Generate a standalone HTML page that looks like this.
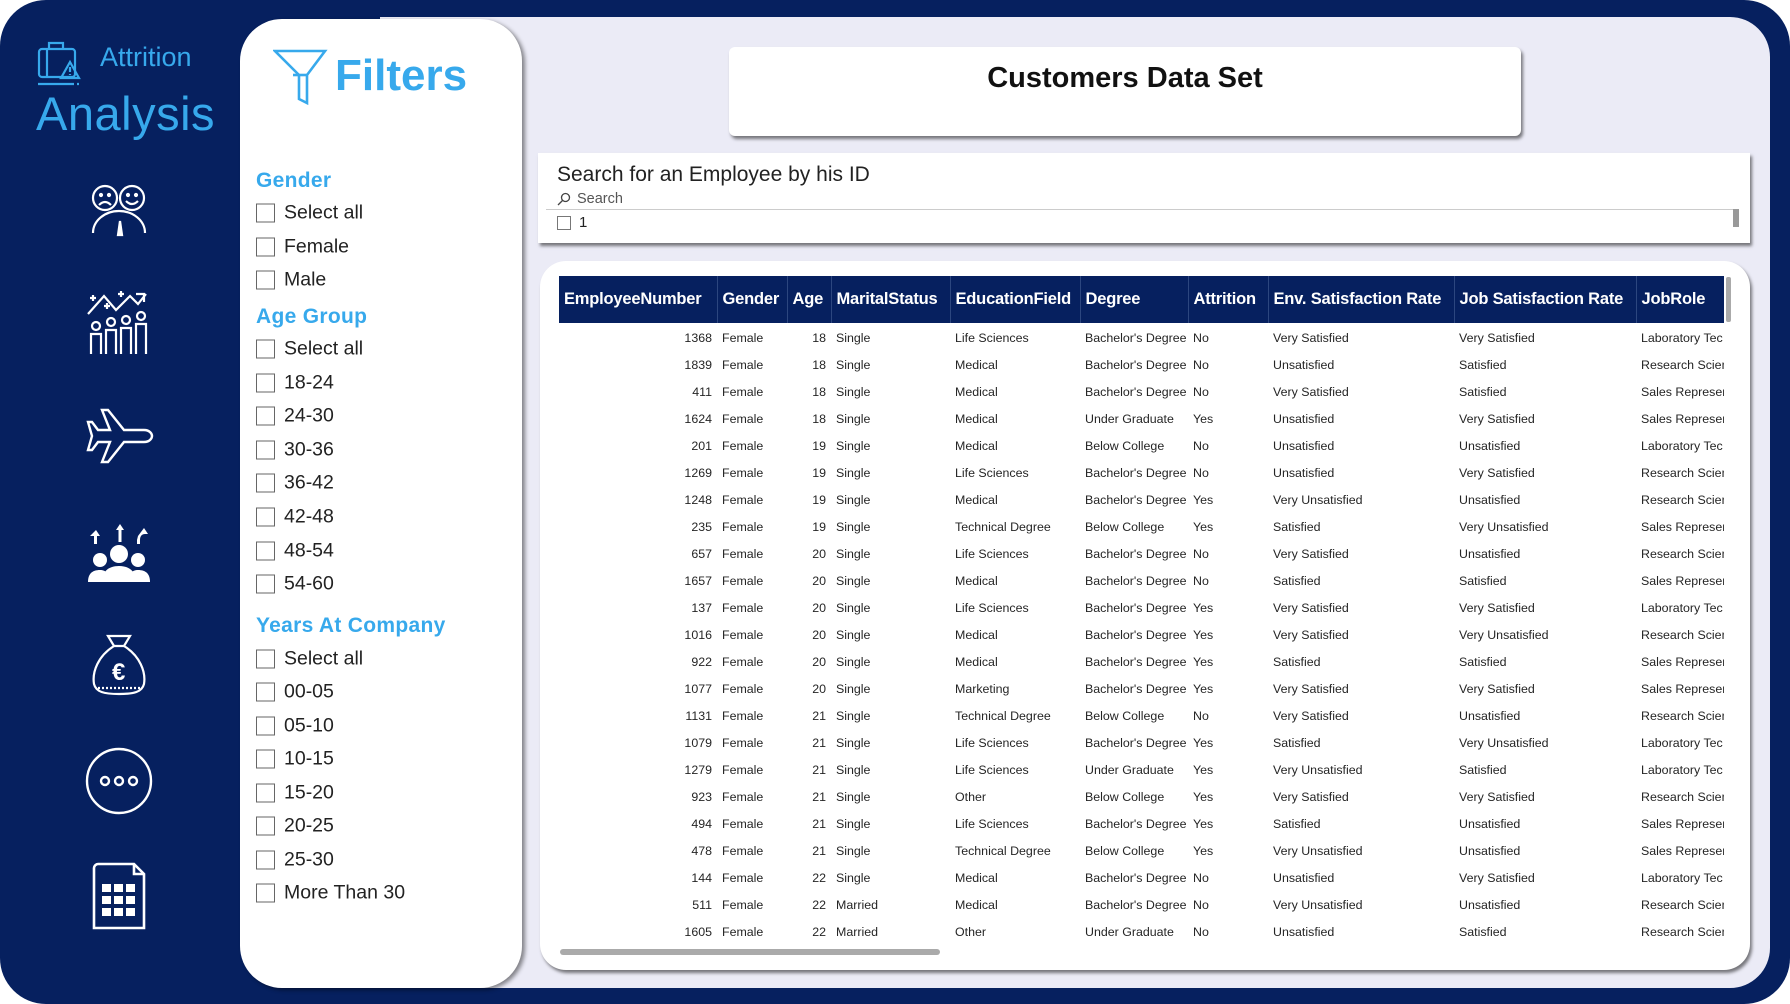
<!DOCTYPE html>
<html><head><meta charset="utf-8"><style>
*{margin:0;padding:0;box-sizing:border-box}
body{width:1790px;height:1004px;background:#fff;font-family:"Liberation Sans",sans-serif;position:relative;overflow:hidden}
.abs{position:absolute}
#dark{left:0;top:0;width:1790px;height:1004px;background:#06205f;border-radius:46px}
#light{left:380px;top:17px;width:1390px;height:971px;background:#ebebf6;border-radius:0 40px 40px 0}
#filt{left:240px;top:19px;width:282px;height:969px;background:#fff;border-radius:42px;box-shadow:3px 2px 4px rgba(0,0,0,.45)}
.card{background:#fff;box-shadow:2px 3px 3px rgba(0,0,0,.5)}
.h{position:absolute;left:256px;color:#37a9ec;font-size:21px;font-weight:bold;letter-spacing:.3px;transform:translateY(-50%)}
.it{position:absolute;left:256px;font-size:19.5px;color:#222;transform:translateY(-50%);display:flex;align-items:center}
.it i{display:inline-block;width:19px;height:19px;border:1.5px solid #666;margin-right:9px}
table{border-collapse:collapse;table-layout:fixed;font-size:12.4px;color:#252525}
th{background:#06205f;color:#fff;font-size:16.5px;font-weight:bold;height:47px;text-align:left;padding:0 5px;border-right:1px solid #2c467f;white-space:nowrap;overflow:hidden;letter-spacing:-.2px}
td{height:27px;padding:0 5px;white-space:nowrap;overflow:hidden}
td.r{text-align:right}
</style></head><body>
<div id="dark" class="abs"></div>
<div id="light" class="abs"></div>

<!-- sidebar -->
<svg class="abs" style="left:36px;top:40px" width="52" height="50" viewBox="0 0 52 50" fill="none" stroke="#37a9ec" stroke-width="2.2">
<rect x="3" y="9" width="36" height="28" rx="3"/><path d="M13 9V3h14v6M11 9v28"/><path d="M34 22l9 16H25z"/><path d="M34 27v5M34 34v1"/><path d="M2 44h36M41 44h2"/></svg>
<div class="abs" style="left:100px;top:42px;font-size:27px;color:#37a9ec">Attrition</div>
<div class="abs" style="left:36px;top:86px;font-size:47px;color:#37a9ec;letter-spacing:.5px">Analysis</div>

<svg class="abs" style="left:88px;top:183px" width="64" height="56" viewBox="0 0 64 56" fill="none" stroke="#fff" stroke-width="2.2">
<circle cx="17" cy="15" r="12"/><circle cx="44" cy="15" r="12"/><circle cx="13" cy="12" r="1" fill="#fff"/><circle cx="21" cy="12" r="1" fill="#fff"/><circle cx="40" cy="12" r="1" fill="#fff"/><circle cx="48" cy="12" r="1" fill="#fff"/>
<path d="M11 22q6-6 12 0M38 18q6 6 12 0"/><path d="M5 50a26 22 0 0 1 52 0"/><path d="M30 52l2-14 2 14z" fill="#fff"/></svg>

<svg class="abs" style="left:84px;top:290px" width="68" height="68" viewBox="0 0 68 68" fill="none" stroke="#fff" stroke-width="2.2">
<path d="M4 24l16-18 12 14 14-14 8 8 8-10"/><path d="M52 4h8v8"/><path d="M6 8h6M9 5v6M34 4h6M37 1v6M20 16h6M23 13v6"/>
<circle cx="12" cy="36" r="4"/><path d="M7 64V44h10v20"/><circle cx="27" cy="32" r="4"/><path d="M22 64V40h10v24"/><circle cx="42" cy="30" r="4"/><path d="M37 64V38h10v26"/><circle cx="57" cy="26" r="4"/><path d="M52 64V34h10v30"/></svg>

<svg class="abs" style="left:84px;top:404px" width="70" height="64" viewBox="0 0 70 64" fill="none" stroke="#fff" stroke-width="2.4">
<path d="M18 6h6l16 20h20c6 0 8 4 8 6s-2 6-8 6H40L24 58h-6l8-20H14l-6 8H4l4-14-4-14h4l6 8h12z"/></svg>

<svg class="abs" style="left:86px;top:520px" width="66" height="62" viewBox="0 0 66 62" fill="#fff">
<path d="M4 16l6-6 4 6h-3v8h-3v-8zM30 10l4-6 4 6h-2.5v12h-3V10zM52 16l6-8 4 6h-3c-3 0-5 2-5 6v4h-3v-4z"/>
<circle cx="33" cy="34" r="9"/><path d="M16 62c0-10 6-16 17-16s17 6 17 16z"/><circle cx="14" cy="40" r="7"/><path d="M2 62c0-8 4-12 12-12 3 0 5 1 6 2v10z"/><circle cx="52" cy="40" r="7"/><path d="M64 62c0-8-4-12-12-12-3 0-5 1-6 2v10z"/></svg>

<svg class="abs" style="left:88px;top:632px" width="62" height="64" viewBox="0 0 62 64" fill="none" stroke="#fff" stroke-width="2.2">
<path d="M20 4h22l-6 10H26z"/><path d="M26 14C10 24 4 40 6 52c2 8 10 10 25 10s23-2 25-10c2-12-4-28-20-38"/><path d="M10 56h42" stroke-dasharray="2 2"/>
<text x="24" y="48" font-family="Liberation Sans" font-size="24" font-weight="bold" fill="#fff" stroke="none">€</text></svg>

<svg class="abs" style="left:84px;top:746px" width="70" height="70" viewBox="0 0 70 70" fill="none" stroke="#fff" stroke-width="2.4">
<circle cx="35" cy="35" r="32"/><circle cx="21" cy="35" r="4"/><circle cx="35" cy="35" r="4"/><circle cx="49" cy="35" r="4"/></svg>

<svg class="abs" style="left:92px;top:862px" width="54" height="70" viewBox="0 0 54 70" fill="none" stroke="#fff" stroke-width="2.6">
<path d="M6 2h36l10 10v54H2V6c0-2 2-4 4-4z"/><path d="M42 2v10h10"/>
<g fill="#fff" stroke="none"><rect x="10" y="22" width="9" height="8"/><rect x="22" y="22" width="9" height="8"/><rect x="34" y="22" width="9" height="8"/><rect x="10" y="34" width="9" height="8"/><rect x="22" y="34" width="9" height="8"/><rect x="34" y="34" width="9" height="8"/><rect x="10" y="46" width="9" height="8"/><rect x="22" y="46" width="9" height="8"/><rect x="34" y="46" width="9" height="8"/></g></svg>

<!-- filters -->
<div id="filt" class="abs"></div>
<svg class="abs" style="left:273px;top:49px" width="56" height="58" viewBox="0 0 56 58" fill="none" stroke="#37a9ec" stroke-width="2.6">
<path d="M2 2h50L34 26v28l-8-4V26z"/><path d="M20 26h14"/></svg>
<div class="abs" style="left:335px;top:51px;font-size:44px;font-weight:bold;color:#37a9ec">Filters</div>

<div class="h" style="top:181px">Gender</div>
<div class="it" style="top:213px"><i></i>Select all</div>
<div class="it" style="top:247px"><i></i>Female</div>
<div class="it" style="top:280px"><i></i>Male</div>
<div class="h" style="top:317px">Age Group</div>
<div class="it" style="top:349px"><i></i>Select all</div>
<div class="it" style="top:383px"><i></i>18-24</div>
<div class="it" style="top:416px"><i></i>24-30</div>
<div class="it" style="top:450px"><i></i>30-36</div>
<div class="it" style="top:483px"><i></i>36-42</div>
<div class="it" style="top:517px"><i></i>42-48</div>
<div class="it" style="top:551px"><i></i>48-54</div>
<div class="it" style="top:584px"><i></i>54-60</div>
<div class="h" style="top:626px">Years At Company</div>
<div class="it" style="top:659px"><i></i>Select all</div>
<div class="it" style="top:692px"><i></i>00-05</div>
<div class="it" style="top:726px"><i></i>05-10</div>
<div class="it" style="top:759px"><i></i>10-15</div>
<div class="it" style="top:793px"><i></i>15-20</div>
<div class="it" style="top:826px"><i></i>20-25</div>
<div class="it" style="top:860px"><i></i>25-30</div>
<div class="it" style="top:893px"><i></i>More Than 30</div>

<!-- title -->
<div class="abs card" style="left:729px;top:47px;width:792px;height:89px;border-radius:6px"></div>
<div class="abs" style="left:729px;top:62px;width:792px;text-align:center;font-size:29px;font-weight:bold;color:#111">Customers Data Set</div>

<!-- search -->
<div class="abs card" style="left:538px;top:153px;width:1212px;height:90px"></div>
<div class="abs" style="left:557px;top:163px;font-size:21px;color:#222">Search for an Employee by his ID</div>
<svg class="abs" style="left:557px;top:192px" width="14" height="14" viewBox="0 0 14 14" fill="none" stroke="#444" stroke-width="1.3"><circle cx="8.5" cy="5.5" r="4"/><path d="M6 8l-5 5"/></svg>
<div class="abs" style="left:577px;top:191px;font-size:14.5px;color:#555">Search</div>
<div class="abs" style="left:546px;top:209px;width:1190px;height:1px;background:#ccc"></div>
<div class="abs" style="left:557px;top:216px;width:14px;height:14px;border:1.3px solid #777"></div>
<div class="abs" style="left:579px;top:214px;font-size:15px;color:#222">1</div>
<div class="abs" style="left:1733px;top:209px;width:6px;height:18px;background:#999"></div>

<!-- table card -->
<div class="abs card" style="left:540px;top:261px;width:1210px;height:709px;border-radius:26px"></div>
<div class="abs" style="left:559px;top:276px;width:1165px;height:670px;overflow:hidden">
<table style="width:1165px">
<colgroup><col style="width:158px"><col style="width:70px"><col style="width:44px"><col style="width:119px"><col style="width:130px"><col style="width:108px"><col style="width:80px"><col style="width:186px"><col style="width:182px"><col style="width:88px"></colgroup>
<tr><th>EmployeeNumber</th><th>Gender</th><th>Age</th><th>MaritalStatus</th><th>EducationField</th><th>Degree</th><th>Attrition</th><th>Env. Satisfaction Rate</th><th>Job Satisfaction Rate</th><th>JobRole</th></tr>
<tr><td style="height:1px;padding:0" colspan="10"></td></tr>
<tr><td class="r">1368</td><td>Female</td><td class="r">18</td><td>Single</td><td>Life Sciences</td><td>Bachelor's Degree</td><td>No</td><td>Very Satisfied</td><td>Very Satisfied</td><td>Laboratory Tec</td></tr>
<tr><td class="r">1839</td><td>Female</td><td class="r">18</td><td>Single</td><td>Medical</td><td>Bachelor's Degree</td><td>No</td><td>Unsatisfied</td><td>Satisfied</td><td>Research Scien</td></tr>
<tr><td class="r">411</td><td>Female</td><td class="r">18</td><td>Single</td><td>Medical</td><td>Bachelor's Degree</td><td>No</td><td>Very Satisfied</td><td>Satisfied</td><td>Sales Represen</td></tr>
<tr><td class="r">1624</td><td>Female</td><td class="r">18</td><td>Single</td><td>Medical</td><td>Under Graduate</td><td>Yes</td><td>Unsatisfied</td><td>Very Satisfied</td><td>Sales Represen</td></tr>
<tr><td class="r">201</td><td>Female</td><td class="r">19</td><td>Single</td><td>Medical</td><td>Below College</td><td>No</td><td>Unsatisfied</td><td>Unsatisfied</td><td>Laboratory Tec</td></tr>
<tr><td class="r">1269</td><td>Female</td><td class="r">19</td><td>Single</td><td>Life Sciences</td><td>Bachelor's Degree</td><td>No</td><td>Unsatisfied</td><td>Very Satisfied</td><td>Research Scien</td></tr>
<tr><td class="r">1248</td><td>Female</td><td class="r">19</td><td>Single</td><td>Medical</td><td>Bachelor's Degree</td><td>Yes</td><td>Very Unsatisfied</td><td>Unsatisfied</td><td>Research Scien</td></tr>
<tr><td class="r">235</td><td>Female</td><td class="r">19</td><td>Single</td><td>Technical Degree</td><td>Below College</td><td>Yes</td><td>Satisfied</td><td>Very Unsatisfied</td><td>Sales Represen</td></tr>
<tr><td class="r">657</td><td>Female</td><td class="r">20</td><td>Single</td><td>Life Sciences</td><td>Bachelor's Degree</td><td>No</td><td>Very Satisfied</td><td>Unsatisfied</td><td>Research Scien</td></tr>
<tr><td class="r">1657</td><td>Female</td><td class="r">20</td><td>Single</td><td>Medical</td><td>Bachelor's Degree</td><td>No</td><td>Satisfied</td><td>Satisfied</td><td>Sales Represen</td></tr>
<tr><td class="r">137</td><td>Female</td><td class="r">20</td><td>Single</td><td>Life Sciences</td><td>Bachelor's Degree</td><td>Yes</td><td>Very Satisfied</td><td>Very Satisfied</td><td>Laboratory Tec</td></tr>
<tr><td class="r">1016</td><td>Female</td><td class="r">20</td><td>Single</td><td>Medical</td><td>Bachelor's Degree</td><td>Yes</td><td>Very Satisfied</td><td>Very Unsatisfied</td><td>Research Scien</td></tr>
<tr><td class="r">922</td><td>Female</td><td class="r">20</td><td>Single</td><td>Medical</td><td>Bachelor's Degree</td><td>Yes</td><td>Satisfied</td><td>Satisfied</td><td>Sales Represen</td></tr>
<tr><td class="r">1077</td><td>Female</td><td class="r">20</td><td>Single</td><td>Marketing</td><td>Bachelor's Degree</td><td>Yes</td><td>Very Satisfied</td><td>Very Satisfied</td><td>Sales Represen</td></tr>
<tr><td class="r">1131</td><td>Female</td><td class="r">21</td><td>Single</td><td>Technical Degree</td><td>Below College</td><td>No</td><td>Very Satisfied</td><td>Unsatisfied</td><td>Research Scien</td></tr>
<tr><td class="r">1079</td><td>Female</td><td class="r">21</td><td>Single</td><td>Life Sciences</td><td>Bachelor's Degree</td><td>Yes</td><td>Satisfied</td><td>Very Unsatisfied</td><td>Laboratory Tec</td></tr>
<tr><td class="r">1279</td><td>Female</td><td class="r">21</td><td>Single</td><td>Life Sciences</td><td>Under Graduate</td><td>Yes</td><td>Very Unsatisfied</td><td>Satisfied</td><td>Laboratory Tec</td></tr>
<tr><td class="r">923</td><td>Female</td><td class="r">21</td><td>Single</td><td>Other</td><td>Below College</td><td>Yes</td><td>Very Satisfied</td><td>Very Satisfied</td><td>Research Scien</td></tr>
<tr><td class="r">494</td><td>Female</td><td class="r">21</td><td>Single</td><td>Life Sciences</td><td>Bachelor's Degree</td><td>Yes</td><td>Satisfied</td><td>Unsatisfied</td><td>Sales Represen</td></tr>
<tr><td class="r">478</td><td>Female</td><td class="r">21</td><td>Single</td><td>Technical Degree</td><td>Below College</td><td>Yes</td><td>Very Unsatisfied</td><td>Unsatisfied</td><td>Sales Represen</td></tr>
<tr><td class="r">144</td><td>Female</td><td class="r">22</td><td>Single</td><td>Medical</td><td>Bachelor's Degree</td><td>No</td><td>Unsatisfied</td><td>Very Satisfied</td><td>Laboratory Tec</td></tr>
<tr><td class="r">511</td><td>Female</td><td class="r">22</td><td>Married</td><td>Medical</td><td>Bachelor's Degree</td><td>No</td><td>Very Unsatisfied</td><td>Unsatisfied</td><td>Research Scien</td></tr>
<tr><td class="r">1605</td><td>Female</td><td class="r">22</td><td>Married</td><td>Other</td><td>Under Graduate</td><td>No</td><td>Unsatisfied</td><td>Satisfied</td><td>Research Scien</td></tr>
</table></div>
<div class="abs" style="left:1726px;top:277px;width:5px;height:45px;background:#aaa;border-radius:2px"></div>
<div class="abs" style="left:560px;top:949px;width:380px;height:6px;background:#aaa;border-radius:3px"></div>
</body></html>
